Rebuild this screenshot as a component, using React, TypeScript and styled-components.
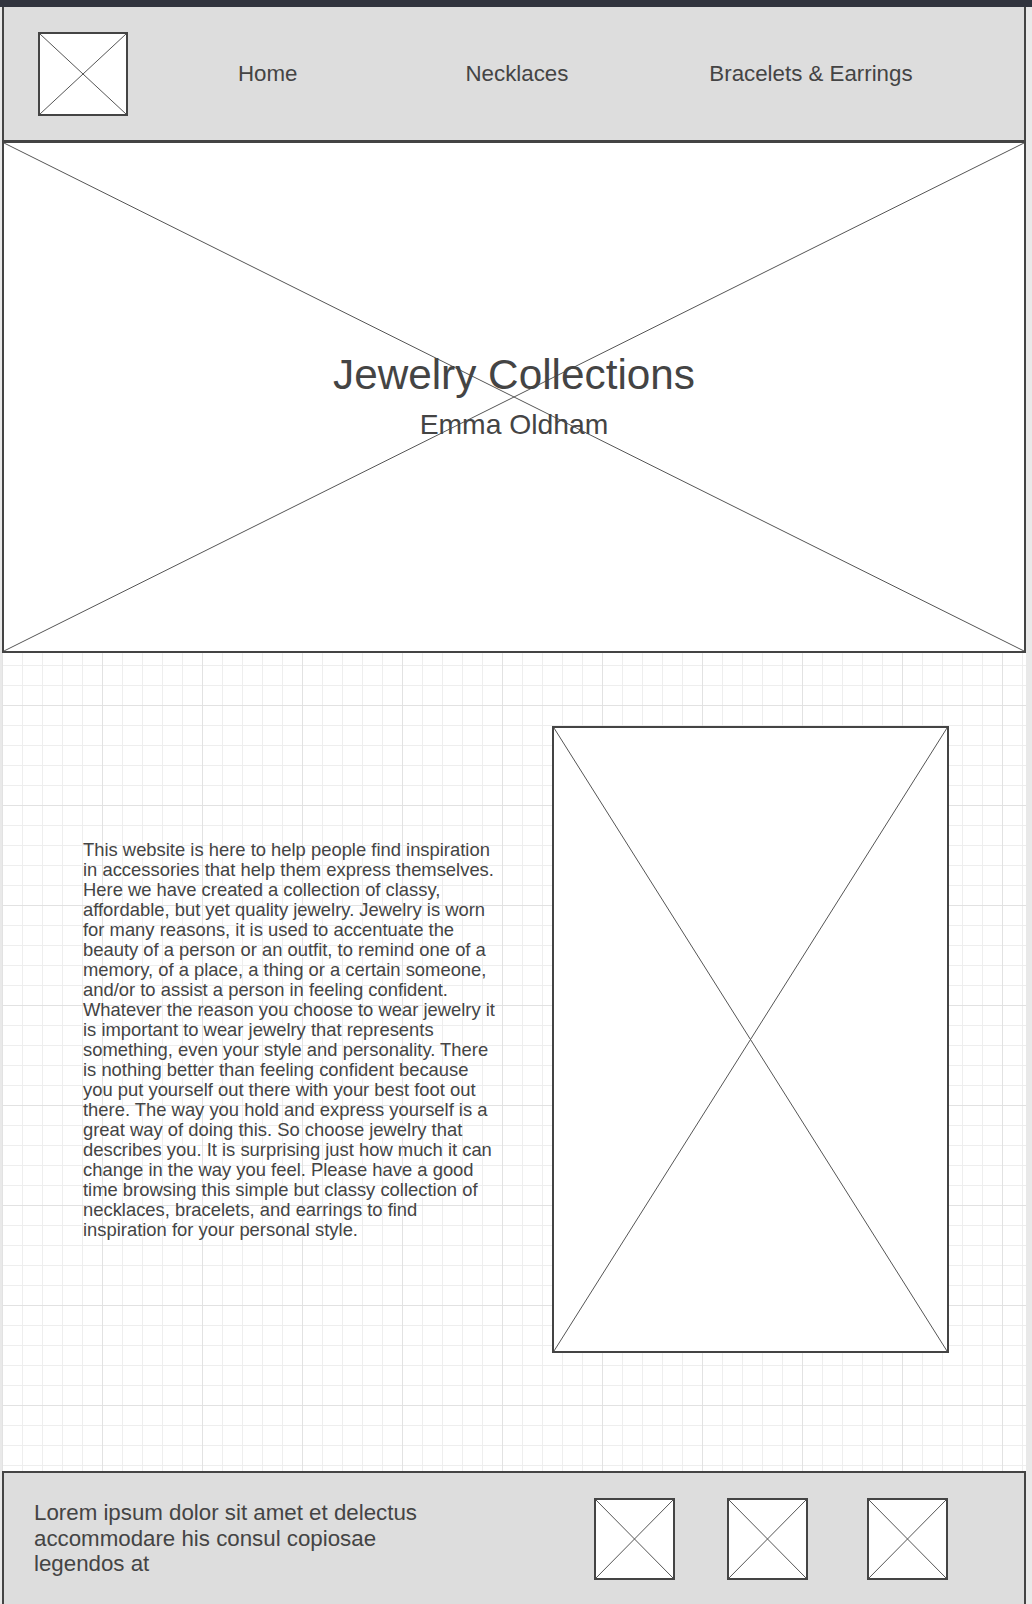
import React from "react";
import styled, { createGlobalStyle } from "styled-components";

const GlobalStyle = createGlobalStyle`
  html, body {
    margin: 0;
    padding: 0;
  }
  body {
    background: #e9e9e9;
    font-family: "Liberation Sans", Arial, sans-serif;
    color: #444444;
  }
`;

const Page = styled.div`
  width: 1032px;
  min-height: 1604px;
  display: flex;
  flex-direction: column;
`;

const TopBar = styled.div`
  height: 7px;
  background: #31343e;
`;

const Frame = styled.div`
  width: 1024px;
  margin-left: 2px;
  display: flex;
  flex-direction: column;
`;

const Header = styled.header`
  box-sizing: border-box;
  height: 136px;
  background: #dddddd;
  border: 2px solid #444444;
  border-top: none;
  border-bottom-width: 3px;
  display: flex;
  align-items: center;
  padding-left: 34px;
`;

const Placeholder = styled.div<{ $w: number; $h: number }>`
  position: relative;
  box-sizing: border-box;
  flex: 0 0 auto;
  width: ${(p) => p.$w}px;
  height: ${(p) => p.$h}px;
  background: #ffffff;
  border: 2px solid #444444;
`;

const CrossSvg = styled.svg`
  position: absolute;
  inset: 0;
  width: 100%;
  height: 100%;
  display: block;
  pointer-events: none;
`;

const Cross: React.FC = () => (
  <CrossSvg viewBox="0 0 100 100" preserveAspectRatio="none">
    <line x1="0" y1="0" x2="100" y2="100" stroke="#555555" strokeWidth="1" vectorEffect="non-scaling-stroke" />
    <line x1="100" y1="0" x2="0" y2="100" stroke="#555555" strokeWidth="1" vectorEffect="non-scaling-stroke" />
  </CrossSvg>
);

const NavLink = styled.a<{ $offset: number }>`
  margin-left: ${(p) => p.$offset}px;
  font-size: 22.3px;
  line-height: 26px;
  color: #444444;
  text-decoration: none;
  white-space: nowrap;
`;

const Hero = styled.section`
  position: relative;
  box-sizing: border-box;
  height: 510px;
  padding-bottom: 3px;
  background: #ffffff;
  border: 2px solid #444444;
  border-top: none;
  display: flex;
  flex-direction: column;
  align-items: center;
  justify-content: center;
`;

const HeroTitle = styled.h1`
  position: relative;
  margin: 0;
  font-weight: 400;
  font-size: 42.3px;
  line-height: 48px;
  color: #444444;
`;

const HeroSubtitle = styled.h2`
  position: relative;
  margin: 9px 0 0;
  font-weight: 400;
  font-size: 28.3px;
  line-height: 32px;
  color: #444444;
`;

const Content = styled.main`
  box-sizing: border-box;
  height: 818px;
  display: flex;
  align-items: center;
  padding: 0 0 45px 81px;
  background-color: #ffffff;
  background-image:
    linear-gradient(to right, #e2e2e2 1px, transparent 1px),
    linear-gradient(to bottom, #e2e2e2 1px, transparent 1px),
    linear-gradient(to right, #eeeeee 1px, transparent 1px),
    linear-gradient(to bottom, #eeeeee 1px, transparent 1px);
  background-size: 100px 100%, 100% 100px, 20px 100%, 100% 20px;
  background-position: 0 0, 0 52px, 0 0, 0 12px;
`;

const Intro = styled.p`
  width: 416px;
  margin: 0 53px 0 0;
  font-size: 18.4px;
  line-height: 20px;
  color: #444444;
`;

const Footer = styled.footer`
  box-sizing: border-box;
  height: 133px;
  background: #dddddd;
  border: 2px solid #444444;
  border-bottom: none;
  display: flex;
  align-items: center;
  padding-left: 30px;
`;

const FooterText = styled.p`
  width: 410px;
  margin: 0;
  font-size: 22.3px;
  line-height: 25.5px;
  color: #444444;
`;

const Social = styled.div`
  display: flex;
  align-items: center;
  gap: 52px;
  margin-left: 150px;
`;

const SocialItem = styled.div<{ $extra?: number }>`
  margin-left: ${(p) => p.$extra ?? 0}px;
  display: flex;
`;

export default function App() {
  return (
    <>
      <GlobalStyle />
      <Page>
        <TopBar />
        <Frame>
          <Header>
            <Placeholder $w={90} $h={84}>
              <Cross />
            </Placeholder>
            <NavLink $offset={110}>Home</NavLink>
            <NavLink $offset={168}>Necklaces</NavLink>
            <NavLink $offset={141}>Bracelets &amp; Earrings</NavLink>
          </Header>
          <Hero>
            <Cross />
            <HeroTitle>Jewelry Collections</HeroTitle>
            <HeroSubtitle>Emma Oldham</HeroSubtitle>
          </Hero>
          <Content>
            <Intro>
              This website is here to help people find inspiration in accessories that help them
              express themselves. Here we have created a collection of classy, affordable, but yet
              quality jewelry. Jewelry is worn for many reasons, it is used to accentuate the beauty
              of a person or an outfit, to remind one of a memory, of a place, a thing or a certain
              someone, and/or to assist a person in feeling confident. Whatever the reason you choose
              to wear jewelry it is important to wear jewelry that represents something, even your
              style and personality. There is nothing better than feeling confident because you put
              yourself out there with your best foot out there. The way you hold and express yourself
              is a great way of doing this. So choose jewelry that describes you. It is surprising
              just how much it can change in the way you feel. Please have a good time browsing this
              simple but classy collection of necklaces, bracelets, and earrings to find inspiration
              for your personal style.
            </Intro>
            <Placeholder $w={397} $h={627}>
              <Cross />
            </Placeholder>
          </Content>
          <Footer>
            <FooterText>
              Lorem ipsum dolor sit amet et delectus accommodare his consul copiosae legendos at
            </FooterText>
            <Social>
              <SocialItem>
                <Placeholder $w={81} $h={82}>
                  <Cross />
                </Placeholder>
              </SocialItem>
              <SocialItem>
                <Placeholder $w={81} $h={82}>
                  <Cross />
                </Placeholder>
              </SocialItem>
              <SocialItem $extra={7}>
                <Placeholder $w={81} $h={82}>
                  <Cross />
                </Placeholder>
              </SocialItem>
            </Social>
          </Footer>
        </Frame>
      </Page>
    </>
  );
}
